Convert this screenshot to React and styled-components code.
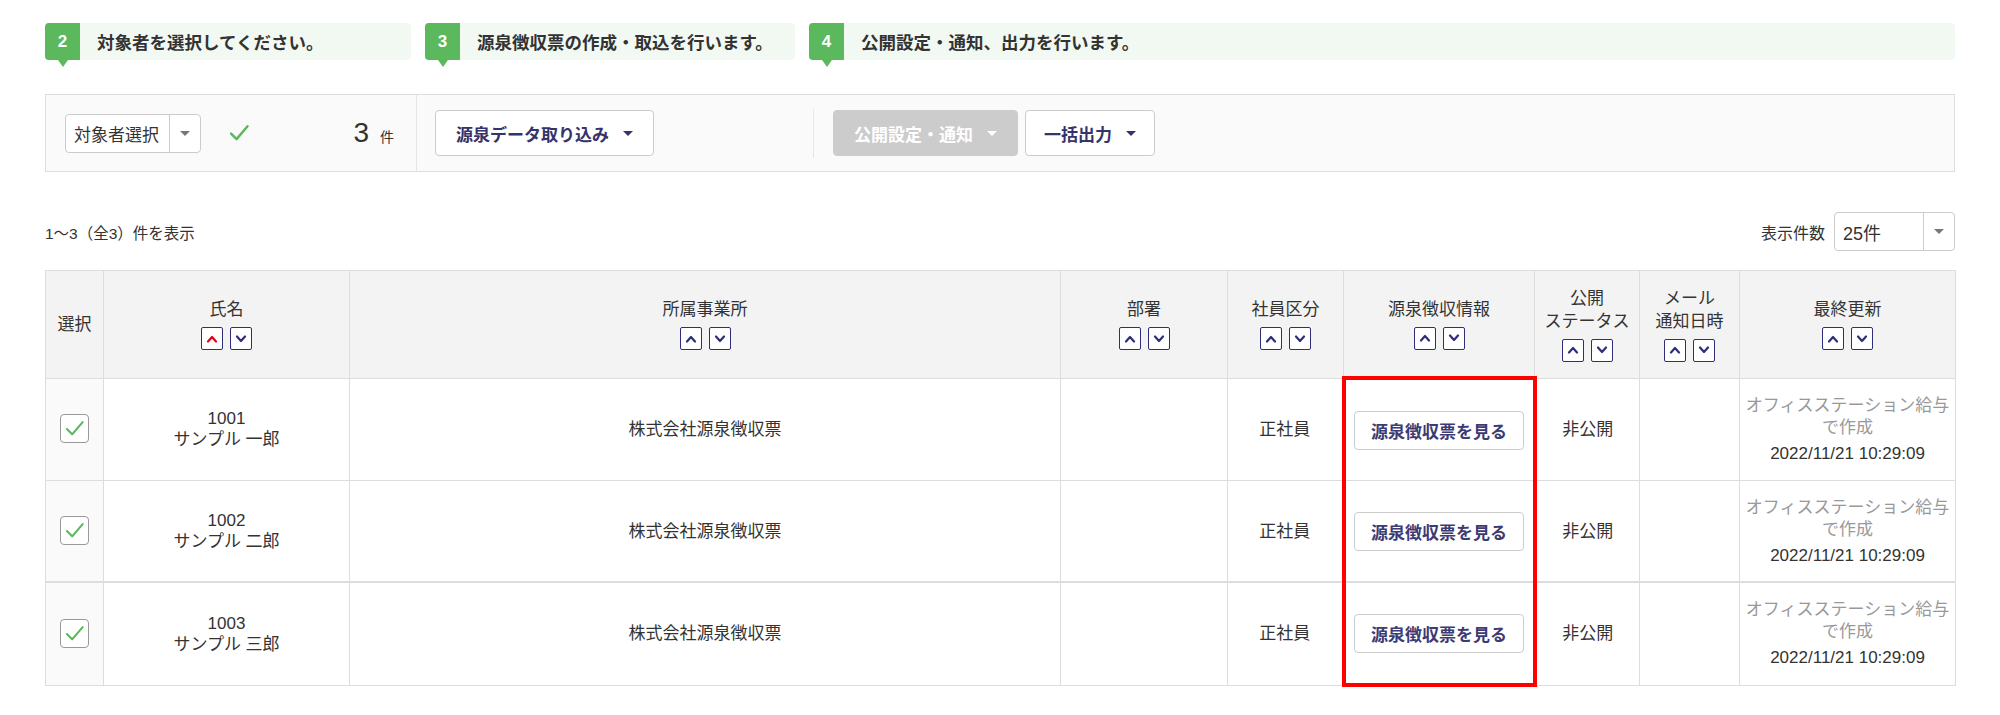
import React from "react";
import styled, { createGlobalStyle } from "styled-components";

const GlobalStyle = createGlobalStyle`
  body {
    margin: 0;
    background: #fff;
    color: #333;
    font-family: "Liberation Sans", "Noto Sans CJK JP", sans-serif;
  }
`;

const Page = styled.div`
  padding: 23px 45px 30px;
`;

const Steps = styled.div`
  display: flex;
  gap: 14px;
`;

const Step = styled.div`
  display: flex;
  align-items: center;
  height: 37px;
  background: #f2f9f2;
  border-radius: 4px;
  width: ${({ w }) => (w ? `${w}px` : "auto")};
  flex: ${({ w }) => (w ? "none" : 1)};
`;

const StepNum = styled.div`
  position: relative;
  width: 35px;
  height: 100%;
  background: #5cb85c;
  color: #fff;
  font-weight: bold;
  font-size: 17px;
  display: flex;
  align-items: center;
  justify-content: center;
  border-radius: 4px 0 0 4px;
  &::after {
    content: "";
    position: absolute;
    left: 50%;
    bottom: -7px;
    margin-left: -5px;
    border-left: 5px solid transparent;
    border-right: 5px solid transparent;
    border-top: 7px solid #5cb85c;
  }
`;

const StepText = styled.div`
  padding-left: 17px;
  font-size: 17.5px;
  font-weight: bold;
  color: #333;
`;

const Toolbar = styled.div`
  margin-top: 34px;
  height: 78px;
  box-sizing: border-box;
  border: 1px solid #ddd;
  background: #fafafa;
  display: flex;
  align-items: center;
`;

const Section = styled.div`
  display: flex;
  align-items: center;
  height: 100%;
  box-sizing: border-box;
  width: ${({ w }) => (w ? `${w}px` : "auto")};
  padding: 0 ${({ pr }) => pr ?? 0}px 0 ${({ pl }) => pl ?? 0}px;
  border-right: ${({ sep }) => (sep ? "1px solid #e6e6e6" : "none")};
  gap: 7px;
`;

const Spacer = styled.span`
  width: ${({ w }) => w}px;
`;

const ShortDivider = styled.div`
  width: 1px;
  height: 49px;
  background: #e6e6e6;
  margin: 0 12px 0 0;
`;

const Combo = styled.div`
  display: flex;
  align-items: stretch;
  height: 39px;
  box-sizing: border-box;
  border: 1px solid #ccc;
  border-radius: 4px;
  background: #fff;
  font-size: ${({ fs }) => fs ?? 17}px;
  width: ${({ w }) => w}px;
`;

const ComboText = styled.div`
  flex: 1;
  display: flex;
  align-items: center;
  padding: 0 8px;
  border-right: 1px solid #ccc;
  color: #333;
`;

const ComboCaret = styled.div`
  width: 30px;
  display: flex;
  align-items: center;
  justify-content: center;
`;

const Caret = styled.span`
  display: inline-block;
  width: 0;
  height: 0;
  border-left: 5px solid transparent;
  border-right: 5px solid transparent;
  border-top: 5px solid ${({ color }) => color || "#777"};
`;

const CheckSlot = styled.span`
  display: flex;
  margin-left: 20px;
`;

const Count = styled.div`
  margin-left: auto;
  display: flex;
  align-items: baseline;
  gap: 11px;
  font-size: 28px;
  color: #333;
  span {
    font-size: 14px;
  }
`;

const Button = styled.button`
  display: inline-flex;
  align-items: center;
  gap: 14px;
  height: 46px;
  padding: 0 ${({ px }) => px ?? 20}px;
  box-sizing: border-box;
  border-radius: 4px;
  font-family: inherit;
  font-size: 17px;
  font-weight: bold;
  border: 1px solid #ccc;
  background: ${({ disabled }) => (disabled ? "#cccccc" : "#fff")};
  color: ${({ disabled }) => (disabled ? "#fff" : "#35336b")};
`;

const InfoRow = styled.div`
  margin-top: 40px;
  height: 39px;
  display: flex;
  align-items: center;
  justify-content: space-between;
`;

const Small = styled.div`
  font-size: 15.5px;
  color: #333;
`;

const PerPage = styled.div`
  display: flex;
  align-items: center;
  gap: 9px;
  font-size: 16px;
`;

const Table = styled.table`
  margin-top: 19px;
  width: 100%;
  border-collapse: collapse;
  table-layout: fixed;
  border: 1px solid #ddd;
  font-size: 17px;
`;

const Th = styled.th`
  background: #f3f3f3;
  border: 1px solid #ddd;
  font-weight: normal;
  height: 105px;
  padding: 0;
  text-align: center;
  vertical-align: middle;
  line-height: 23px;
  color: #333;
`;

const Td = styled.td`
  border: 1px solid #ddd;
  border-top-width: ${({ thick }) => (thick ? 2 : 1)}px;
  height: 100px;
  padding: 0;
  text-align: center;
  vertical-align: middle;
  line-height: 21px;
  background: ${({ shade }) => (shade ? "#fafafa" : "#fff")};
  ${({ mark }) =>
    mark &&
    `
    border-left: 4px solid #f00;
    border-right: 4px solid #f00;
  `}
  ${({ markTop }) => markTop && `border-top: 4px solid #f00;`}
  ${({ markBottom }) => markBottom && `border-bottom: 4px solid #f00;`}
`;

const SortPair = styled.div`
  display: flex;
  justify-content: center;
  gap: 7px;
  margin-top: 6px;
`;

const SortBtn = styled.span`
  width: 22px;
  height: 23px;
  box-sizing: border-box;
  border: 1.5px solid #2e2e7a;
  border-radius: 2px;
  background: #fff;
  display: flex;
  align-items: center;
  justify-content: center;
`;

const Box = styled.span`
  display: inline-flex;
  align-items: center;
  justify-content: center;
  width: 29px;
  height: 29px;
  box-sizing: border-box;
  border: 1px solid #999;
  border-radius: 4px;
  background: #fff;
`;

const ViewButton = styled.button`
  width: 170px;
  height: 39px;
  border: 1px solid #ccc;
  border-radius: 4px;
  background: #fff;
  font-family: inherit;
  font-size: 17px;
  font-weight: bold;
  color: #3d3b73;
`;

const Gray = styled.div`
  color: #999;
  line-height: 22px;
`;

const DateLine = styled.div`
  margin-top: 4px;
  color: #333;
`;

const Chevron = ({ up, color }) => (
  <svg width="12" height="8" viewBox="0 0 12 8">
    <path
      d={up ? "M2 6.5 L6 2 L10 6.5" : "M2 1.5 L6 6 L10 1.5"}
      fill="none"
      stroke={color}
      strokeWidth="2.2"
      strokeLinecap="round"
      strokeLinejoin="round"
    />
  </svg>
);

const Sort = ({ active }) => (
  <SortPair>
    <SortBtn>
      <Chevron up color={active ? "#e60012" : "#2e2e7a"} />
    </SortBtn>
    <SortBtn>
      <Chevron color="#2e2e7a" />
    </SortBtn>
  </SortPair>
);

const Check = ({ size = 18, width = 1.8 }) => (
  <svg width={size} height={size} viewBox="0 0 18 18">
    <path
      d="M2.5 9.5 L7 14 L16 3.5"
      fill="none"
      stroke="#5cb85c"
      strokeWidth={width}
      strokeLinecap="round"
      strokeLinejoin="round"
    />
  </svg>
);

const widths = [58, 246, 711, 167, 116, 191, 105, 100, 216];

const headers = [
  { label: "選択", sort: false },
  { label: "氏名", sort: true, active: true },
  { label: "所属事業所", sort: true },
  { label: "部署", sort: true },
  { label: "社員区分", sort: true },
  { label: "源泉徴収情報", sort: true },
  { label: ["公開", "ステータス"], sort: true },
  { label: ["メール", "通知日時"], sort: true },
  { label: "最終更新", sort: true },
];

const rows = [
  { code: "1001", name: "サンプル 一郎" },
  { code: "1002", name: "サンプル 二郎" },
  { code: "1003", name: "サンプル 三郎" },
];

export default function App() {
  return (
    <>
      <GlobalStyle />
      <Page>
        <Steps>
          <Step w={366}>
            <StepNum>2</StepNum>
            <StepText>対象者を選択してください。</StepText>
          </Step>
          <Step w={370}>
            <StepNum>3</StepNum>
            <StepText>源泉徴収票の作成・取込を行います。</StepText>
          </Step>
          <Step>
            <StepNum>4</StepNum>
            <StepText>公開設定・通知、出力を行います。</StepText>
          </Step>
        </Steps>

        <Toolbar>
          <Section w={371} pl={19} pr={22} sep>
            <Combo w={136}>
              <ComboText>対象者選択</ComboText>
              <ComboCaret>
                <Caret />
              </ComboCaret>
            </Combo>
            <CheckSlot>
              <Check size={22} width={2} />
            </CheckSlot>
            <Count>
              3<span>件</span>
            </Count>
          </Section>
          <Section pl={18}>
            <Button>
              源泉データ取り込み <Caret color="#35336b" />
            </Button>
            <Spacer w={145} />
            <ShortDivider />
            <Button disabled>
              公開設定・通知 <Caret color="#fff" />
            </Button>
            <Button px={18}>
              一括出力 <Caret color="#35336b" />
            </Button>
          </Section>
        </Toolbar>

        <InfoRow>
          <Small>1〜3（全3）件を表示</Small>
          <PerPage>
            表示件数
            <Combo w={121} fs={18}>
              <ComboText>25件</ComboText>
              <ComboCaret>
                <Caret />
              </ComboCaret>
            </Combo>
          </PerPage>
        </InfoRow>

        <Table>
          <colgroup>
            {widths.map((w, i) => (
              <col key={i} style={{ width: w }} />
            ))}
          </colgroup>
          <thead>
            <tr>
              {headers.map((h, i) => (
                <Th key={i}>
                  {Array.isArray(h.label)
                    ? h.label.map((l) => <div key={l}>{l}</div>)
                    : h.label}
                  {h.sort && <Sort active={h.active} />}
                </Th>
              ))}
            </tr>
          </thead>
          <tbody>
            {rows.map((r, i) => {
              const thick = i === 2;
              return (
                <tr key={r.code}>
                  <Td shade thick={thick}>
                    <Box>
                      <Check size={21} width={1.8} />
                    </Box>
                  </Td>
                  <Td thick={thick}>
                    <div>{r.code}</div>
                    <div>{r.name}</div>
                  </Td>
                  <Td thick={thick}>株式会社源泉徴収票</Td>
                  <Td thick={thick} />
                  <Td thick={thick}>正社員</Td>
                  <Td
                    thick={thick}
                    mark
                    markTop={i === 0}
                    markBottom={i === rows.length - 1}
                  >
                    <ViewButton>源泉徴収票を見る</ViewButton>
                  </Td>
                  <Td thick={thick}>非公開</Td>
                  <Td thick={thick} />
                  <Td thick={thick}>
                    <Gray>
                      オフィスステーション給与
                      <br />
                      で作成
                    </Gray>
                    <DateLine>2022/11/21 10:29:09</DateLine>
                  </Td>
                </tr>
              );
            })}
          </tbody>
        </Table>
      </Page>
    </>
  );
}
